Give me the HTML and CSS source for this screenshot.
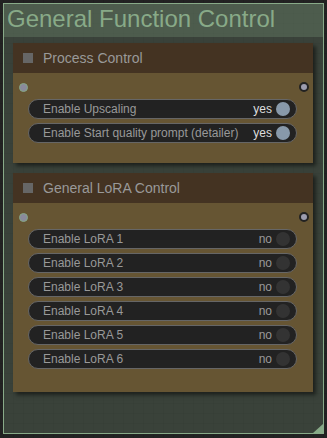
FILE: index.html
```html
<!DOCTYPE html>
<html lang="en">
<head>
    <meta charset="UTF-8">
    <meta name="viewport" content="width=device-width, initial-scale=1.0">
    <title>General Function Control</title>
    <link rel="stylesheet" href="styles.css">
</head>
<body>
    <div class="group">
        <div class="group-title">General Function Control</div>
        <div class="group-body">
            <div class="node">
                <div class="node-title"><span class="node-box"></span>Process Control</div>
                <div class="node-body">
                    <div class="slots">
                        <span class="slot slot-in"></span>
                        <span class="slot slot-out"></span>
                    </div>
                    <div class="toggle on">
                        <span class="toggle-label">Enable Upscaling</span>
                        <span class="toggle-value">yes</span>
                        <span class="knob"></span>
                    </div>
                    <div class="toggle on">
                        <span class="toggle-label">Enable Start quality prompt (detailer)</span>
                        <span class="toggle-value">yes</span>
                        <span class="knob"></span>
                    </div>
                </div>
            </div>

            <div class="node node-lora">
                <div class="node-title"><span class="node-box"></span>General LoRA Control</div>
                <div class="node-body">
                    <div class="slots">
                        <span class="slot slot-in"></span>
                        <span class="slot slot-out"></span>
                    </div>
                    <div class="toggle">
                        <span class="toggle-label">Enable LoRA 1</span>
                        <span class="toggle-value">no</span>
                        <span class="knob"></span>
                    </div>
                    <div class="toggle">
                        <span class="toggle-label">Enable LoRA 2</span>
                        <span class="toggle-value">no</span>
                        <span class="knob"></span>
                    </div>
                    <div class="toggle">
                        <span class="toggle-label">Enable LoRA 3</span>
                        <span class="toggle-value">no</span>
                        <span class="knob"></span>
                    </div>
                    <div class="toggle">
                        <span class="toggle-label">Enable LoRA 4</span>
                        <span class="toggle-value">no</span>
                        <span class="knob"></span>
                    </div>
                    <div class="toggle">
                        <span class="toggle-label">Enable LoRA 5</span>
                        <span class="toggle-value">no</span>
                        <span class="knob"></span>
                    </div>
                    <div class="toggle">
                        <span class="toggle-label">Enable LoRA 6</span>
                        <span class="toggle-value">no</span>
                        <span class="knob"></span>
                    </div>
                </div>
            </div>
        </div>
        <span class="resize"></span>
    </div>
</body>
</html>
```

FILE: styles.css
```css
body {
    margin: 0;
    padding: 0;
    font-family: "Liberation Sans", Arial, sans-serif;
    background-color: #222;
    background-image:
        linear-gradient(to right, rgba(0, 0, 0, 0.1) 1px, transparent 1px),
        linear-gradient(to bottom, rgba(0, 0, 0, 0.1) 1px, transparent 1px);
    background-size: 10px 10px;
    background-position: 3px 3px;
    height: 438px;
    overflow: hidden;
}

.group {
    position: relative;
    box-sizing: border-box;
    margin: 3px;
    width: 321px;
    height: 431px;
    border: 1px solid #8a8;
    background-color: rgba(136, 170, 136, 0.24);
}

.group-title {
    height: 33px;
    box-sizing: border-box;
    padding: 0 0 4px 3px;
    line-height: 29px;
    font-size: 24px;
    color: #8a8;
    background-color: rgba(136, 170, 136, 0.25);
    white-space: nowrap;
}

.group-body {
    padding: 6px 0 0 9px;
}

.node {
    width: 300px;
    background-color: #653;
    box-shadow: 3px 3px 4px rgba(0, 0, 0, 0.5);
}

.node-lora {
    margin-top: 10px;
}

.node-title {
    display: flex;
    align-items: center;
    height: 30px;
    line-height: 30px;
    background-color: #432;
    color: #999;
    font-size: 14px;
}

.node-box {
    width: 10px;
    height: 10px;
    margin: 0 10px 0 10px;
    background-color: #666;
}

.node-body {
    display: flex;
    flex-direction: column;
    gap: 4px;
    padding-bottom: 20px;
}

.node-lora .node-body {
    padding-bottom: 23px;
}

.slots {
    display: flex;
    justify-content: space-between;
    align-items: flex-start;
    height: 22px;
    padding: 10px 4px 0 6px;
    box-sizing: border-box;
}

.slot {
    box-sizing: border-box;
    border-radius: 50%;
}

.slot-in {
    width: 9px;
    height: 9px;
    background-color: #8a8a9c;
    border: 1px solid #86a886;
}

.slot-out {
    width: 10px;
    height: 10px;
    margin-top: -1px;
    background-color: #9c9cae;
    border: 2px solid #222;
}

.toggle {
    display: flex;
    align-items: center;
    box-sizing: border-box;
    height: 20px;
    margin: 0 16px 0 15px;
    padding: 0 6px 0 14px;
    border: 1px solid #666;
    border-radius: 10px;
    background-color: #222;
    font-size: 12px;
    line-height: 18px;
    color: #999;
}

.toggle-label {
    flex: 1;
    white-space: nowrap;
}

.toggle-value {
    color: #999;
}

.toggle.on .toggle-value {
    color: #ddd;
}

.knob {
    width: 14px;
    height: 14px;
    margin-left: 4px;
    border-radius: 50%;
    background-color: #333;
}

.toggle.on .knob {
    background-color: #89a;
}

.resize {
    position: absolute;
    right: 0;
    bottom: 0;
    width: 10px;
    height: 9px;
    background-color: #8a8;
    clip-path: polygon(100% 0, 100% 100%, 0 100%);
}
```
